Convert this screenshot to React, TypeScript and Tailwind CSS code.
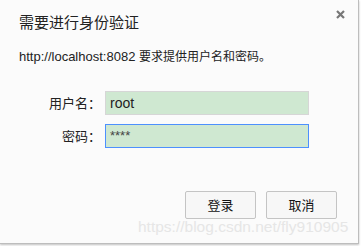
import React from 'react'

const font = { fontFamily: '"Microsoft YaHei", "Noto Sans CJK SC", sans-serif' }
const latin = { fontFamily: '"Liberation Sans", "Noto Sans CJK SC", sans-serif' }

function Label({ text }: { text: string }) {
  return (
    <label className="flex justify-end items-center pr-[7px] text-[13px] leading-[16px] text-[#222]">
      <span>{text}</span>
      <span className="inline-block w-[6px] overflow-visible whitespace-nowrap">：</span>
    </label>
  )
}

export default function App() {
  return (
    <div className="w-[362px] h-[246px] bg-white flex overflow-hidden" style={font}>
      <div className="relative w-[359px] h-[244px] bg-[#fbfbfb] border-r border-b border-[#bdbdbd] shadow-[0_1px_2px_rgba(0,0,0,0.25)] flex flex-col">
        <div className="flex items-start justify-between pl-[19px] pr-[12px] pt-[13px]">
          <h1 className="text-[15px] leading-[18px] text-[#222]">需要进行身份验证</h1>
          <svg width="9" height="9" viewBox="0 0 9 9" className="mt-[-3px] mr-[1px]">
            <path d="M1 1L8 8M8 1L1 8" stroke="#777" strokeWidth="2.2" />
          </svg>
        </div>
        <p className="pl-[19px] mt-[17px] text-[13px] leading-[16px] text-[#222]" style={latin}>
          http://localhost:8082 <span className="text-[12px]" style={font}>要求提供用户名和密码。</span>
        </p>
        <div className="mt-[26px] grid grid-cols-[101px_204px] gap-x-[4px] gap-y-[9px] items-center">
          <Label text="用户名" />
          <div className="h-[24px] bg-[#cfe8d1] border border-[#d6d6d6] flex items-center pl-[4px] text-[14px] text-[#222]" style={latin}>root</div>
          <Label text="密码" />
          <div className="h-[24px] bg-[#cfe8d1] border border-[#4d90fe] flex items-center pl-[4px] text-[13px] text-[#444]" style={latin}>****</div>
        </div>
        <div className="mt-auto mb-[24px] flex justify-end gap-[10px] pr-[21px]">
          <button className="w-[71px] h-[28px] border border-[#c4c4c4] rounded-[2px] bg-[#f7f7f7] text-[13px] text-[#111]">登录</button>
          <button className="w-[71px] h-[28px] border border-[#c4c4c4] rounded-[2px] bg-[#f7f7f7] text-[13px] text-[#111]">取消</button>
        </div>
        <span className="absolute left-[138px] top-[218px] text-[15.5px] leading-[18px] text-[#e6e6e6]" style={latin}>https://blog.csdn.net/fly910905</span>
      </div>
    </div>
  )
}
